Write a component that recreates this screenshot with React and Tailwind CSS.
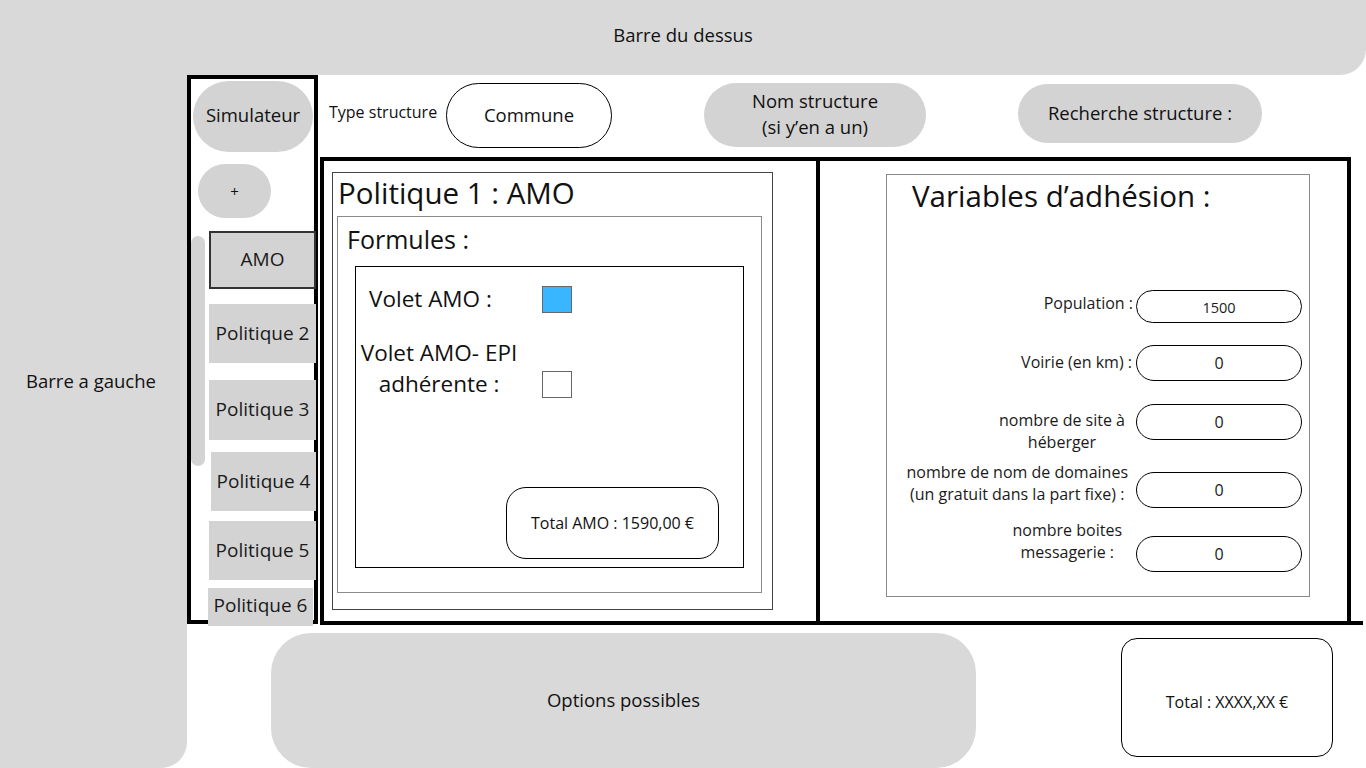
import React from "react";

const F = "font-['Open_Sans','Noto_Sans',sans-serif]";

function SideItem({ children, className = "" }) {
  return (
    <div className={`shrink-0 bg-[#d3d3d3] flex items-center justify-center text-[19px] text-[#1a1a1a] relative ${className}`}>
      {children}
    </div>
  );
}

function VarRow({ rowClass, labelClass, inputClass, label, value, valueClass = "text-[16px]" }) {
  return (
    <div className={`shrink-0 flex justify-end pr-[7px] ${rowClass}`}>
      <div className={`text-center text-[16px] leading-[22px] text-[#1a1a1a] whitespace-nowrap ${labelClass}`}>{label}</div>
      <div className={`shrink-0 w-[166px] rounded-full border border-black flex items-center justify-center text-[#1a1a1a] ${valueClass} ${inputClass}`}>
        {value}
      </div>
    </div>
  );
}

export default function App() {
  return (
    <div className={`w-[1366px] h-[768px] overflow-hidden bg-white flex flex-col text-[#111] ${F}`}>
      {/* Top bar */}
      <div className="h-[75px] shrink-0 bg-[#d9d9d9] rounded-br-[26px] flex items-center justify-center text-[18.5px] pb-[5px]">
        Barre du dessus
      </div>

      <div className="flex flex-1 min-h-0">
        {/* Left bar */}
        <div className="w-[187px] shrink-0 bg-[#d9d9d9] rounded-br-[26px] flex justify-center pt-[292px] text-[18.5px] pr-[5px]">
          Barre a gauche
        </div>

        <div className="flex-1 flex flex-col min-w-0">
          <div className="flex h-[550px] shrink-0">
            {/* Sidebar frame */}
            <div className="w-[131px] h-[549px] shrink-0 border-4 border-black flex flex-col">
              <div className="shrink-0 ml-[2px] mt-[2px] w-[120px] h-[71px] rounded-[36px] bg-[#d3d3d3] flex items-center justify-center text-[18.5px] pb-[3px]">
                Simulateur
              </div>
              <div className="shrink-0 ml-[7px] mt-[12px] w-[73px] h-[54px] rounded-full bg-[#d3d3d3] flex items-center justify-center text-[15px]">
                +
              </div>
              <div className="shrink-0 flex mt-[13px]">
                <div className="shrink-0 mt-[5px] w-[14px] h-[230px] rounded-full bg-[#d3d3d3]" />
                <div className="ml-[4px] flex flex-col">
                  <SideItem className="w-[107px] h-[58px] border-2 border-[#333] pb-[2px]">AMO</SideItem>
                  <SideItem className="mt-[15px] w-[107px] h-[59px]">Politique 2</SideItem>
                  <SideItem className="mt-[17px] w-[107px] h-[60px] pb-[2px]">Politique 3</SideItem>
                  <SideItem className="mt-[12px] ml-[2px] w-[105px] h-[59px]">Politique 4</SideItem>
                  <SideItem className="mt-[10px] w-[107px] h-[59px]">Politique 5</SideItem>
                  <SideItem className="mt-[8px] -ml-[1px] w-[105px] h-[38px] text-[18.5px] pb-[4px]">Politique 6</SideItem>
                </div>
              </div>
            </div>

            {/* Right column */}
            <div className="flex-1 flex flex-col min-w-0">
              {/* Top controls */}
              <div className="h-[82px] shrink-0 flex items-start pl-[11px]">
                <div className="shrink-0 w-[117px] mt-[26px] text-[16px] leading-[22px] whitespace-nowrap">Type structure</div>
                <div className="shrink-0 mt-[8px] w-[166px] h-[65px] rounded-[33px] border border-black flex items-center justify-center text-[18.5px] pb-[2px]">
                  Commune
                </div>
                <div className="shrink-0 ml-[92px] mt-[8px] w-[222px] h-[64px] rounded-[32px] bg-[#d3d3d3] flex items-center justify-center text-center text-[18.5px] leading-[26px] pb-[2px]">
                  Nom structure
                  <br />
                  (si y’en a un)
                </div>
                <div className="shrink-0 ml-[92px] mt-[9px] w-[244px] h-[59px] rounded-[30px] bg-[#d3d3d3] flex items-center justify-center text-[18.5px] pb-[2px]">
                  Recherche structure :
                </div>
              </div>

              {/* Main frame */}
              <div className="ml-[2px] w-[1031px] h-[464px] shrink-0 border-t-4 border-x-4 border-black flex">
                {/* Left panel */}
                <div className="w-[496px] shrink-0 border-r-4 border-black pl-[8px] pt-[11px]">
                  <div className="w-[441px] h-[438px] border border-[#444] flex flex-col">
                    <div className="shrink-0 pl-[5px] mt-[1px] text-[29.5px] leading-[38px] whitespace-nowrap">Politique 1 : AMO</div>
                    <div className="shrink-0 ml-[4px] mt-[4px] w-[425px] h-[377px] border border-[#8a8a8a] flex flex-col">
                      <div className="shrink-0 pl-[9px] mt-[5px] text-[25px] leading-[34px]">Formules :</div>
                      <div className="shrink-0 ml-[17px] mt-[10px] w-[389px] h-[302px] border border-black flex flex-col">
                        <div className="shrink-0 flex mt-[17px]">
                          <div className="w-[186px] pl-[13px] text-[22.5px] leading-[30px] whitespace-nowrap">Volet AMO :</div>
                          <div className="mt-[2px] w-[30px] h-[27px] bg-[#38b6ff] border border-[#666]" />
                        </div>
                        <div className="shrink-0 flex mt-[23px]">
                          <div className="w-[166px] text-center text-[22.5px] leading-[31px] whitespace-nowrap">
                            Volet AMO- EPI
                            <br />
                            adhérente :
                          </div>
                          <div className="ml-[20px] mt-[34px] w-[30px] h-[27px] bg-white border border-[#666]" />
                        </div>
                        <div className="shrink-0 ml-[150px] mt-[88px] w-[213px] h-[72px] rounded-[20px] border border-black flex items-center justify-center text-[16px]">
                          Total AMO : 1590,00 €
                        </div>
                      </div>
                    </div>
                  </div>
                </div>

                {/* Right panel */}
                <div className="flex-1 pl-[66px] pt-[13px]">
                  <div className="w-[424px] h-[423px] border border-[#8a8a8a] flex flex-col">
                    <div className="shrink-0 pl-[25px] mt-[1px] text-[29.5px] leading-[40px] whitespace-nowrap">Variables d’adhésion :</div>
                    <VarRow
                      rowClass="mt-[74px]"
                      labelClass="mr-[3px] mt-[2px]"
                      inputClass="h-[33px]"
                      label="Population :"
                      value="1500"
                      valueClass="text-[14.5px] pt-[3px]"
                    />
                    <VarRow
                      rowClass="mt-[22px]"
                      labelClass="mr-[4px] mt-[6px]"
                      inputClass="h-[36px]"
                      label="Voirie (en km) :"
                      value="0"
                    />
                    <VarRow
                      rowClass="mt-[23px]"
                      labelClass="mr-[11px] mt-[5px]"
                      inputClass="h-[36px]"
                      label={<>nombre de site à<br />héberger</>}
                      value="0"
                    />
                    <VarRow
                      rowClass="mt-[8px]"
                      labelClass="mr-[8px]"
                      inputClass="mt-[11px] h-[36px]"
                      label={<>nombre de nom de domaines<br />(un gratuit dans la part fixe) :</>}
                      value="0"
                    />
                    <VarRow
                      rowClass="mt-[11px]"
                      labelClass="mr-[14px]"
                      inputClass="mt-[17px] h-[36px]"
                      label={<>nombre boites<br />messagerie :</>}
                      value="0"
                    />
                  </div>
                </div>
              </div>
              <div className="ml-[2px] w-[1043px] h-[4px] shrink-0 bg-black" />
            </div>
          </div>

          {/* Bottom row */}
          <div className="flex items-start">
            <div className="shrink-0 ml-[84px] mt-[8px] w-[705px] h-[135px] rounded-[40px] bg-[#d9d9d9] flex items-center justify-center text-[18.5px] pb-[2px]">
              Options possibles
            </div>
            <div className="shrink-0 ml-[145px] mt-[13px] w-[212px] h-[119px] rounded-[16px] border border-black flex items-center justify-center text-[16px] pt-[9px]">
              Total : XXXX,XX €
            </div>
          </div>
        </div>
      </div>
    </div>
  );
}
